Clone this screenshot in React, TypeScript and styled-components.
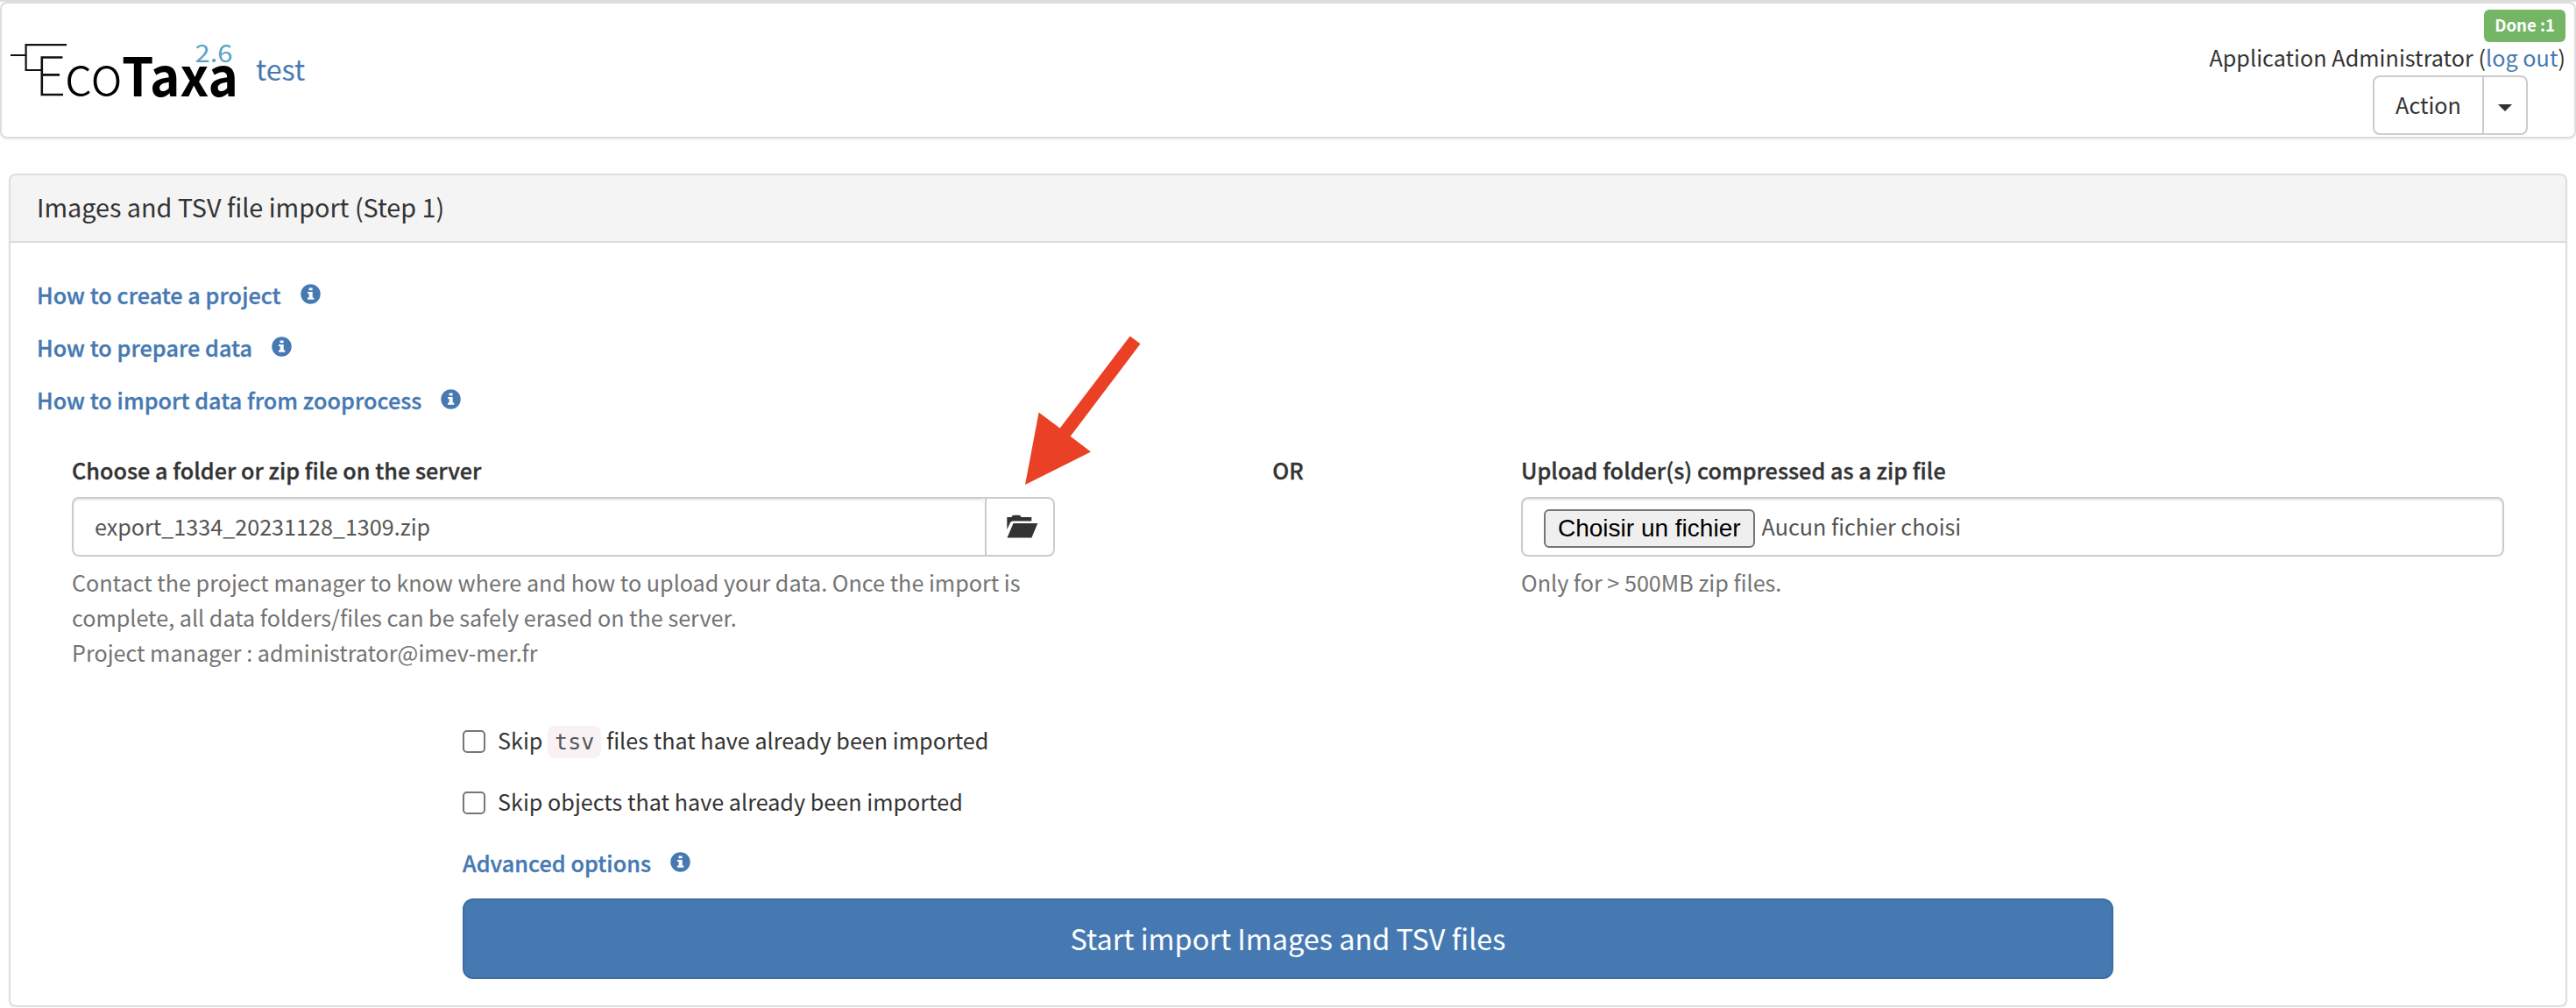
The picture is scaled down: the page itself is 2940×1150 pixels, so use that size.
import React from "react";
import styled, { createGlobalStyle } from "styled-components";

const GlobalStyle = createGlobalStyle`
  *, *::before, *::after { box-sizing: border-box; }
  body {
    margin: 0;
    background: #fff;
    color: #333;
    font-family: "Noto Sans CJK SC", "Open Sans", sans-serif;
    font-size: 25.15px;
    line-height: 40px;
  }
`;

const Page = styled.div`
  border-top: 2px solid #ddd;
`;

const Navbar = styled.header`
  display: flex;
  justify-content: space-between;
  height: 156px;
  padding: 0 10px 0 10px;
  border: 2px solid #ddd;
  border-radius: 8px;
  box-shadow: 0 2px 2px rgba(0, 0, 0, 0.05);
`;

const Brand = styled.div`
  display: flex;
  align-items: flex-start;
  gap: 23px;
  padding-top: 46px;
`;

const Logo = styled.svg`
  display: block;
  width: 257px;
  height: 60px;
  overflow: visible;
`;

const ProjectLink = styled.a`
  margin-top: 8px;
  font-size: 32.3px;
  color: #4679b2;
`;

const UserArea = styled.div`
  display: flex;
  flex-direction: column;
  align-items: flex-end;
  padding-top: 7px;
`;

const JobBadge = styled.span`
  height: 37px;
  padding: 0 12px;
  border-radius: 6px;
  background: #74b566;
  color: #fff;
  font-size: 18.6px;
  font-weight: 700;
  line-height: 34px;
`;

const UserName = styled.div`
  margin-top: -3px;
  line-height: 41px;
  letter-spacing: 0.04px;
`;

const Link = styled.a`
  color: #4679b2;
`;

const ButtonGroup = styled.div`
  display: flex;
  width: 177px;
  height: 68px;
  margin-right: 43px;
  border: 2px solid #ccc;
  border-radius: 8px;
`;

const ActionButton = styled.div`
  flex: 1;
  padding-top: 11px;
  text-align: center;
`;

const CaretButton = styled.div`
  display: flex;
  align-items: center;
  justify-content: center;
  width: 50px;
  border-left: 2px solid #ccc;
`;

const Caret = styled.span`
  margin-top: 5px;
  border: 8px solid transparent;
  border-top-color: #333;
  border-bottom: 0;
`;

const Panel = styled.section`
  height: 951px;
  margin: 40px 10px 0;
  border: 2px solid #ddd;
  border-radius: 8px;
  box-shadow: 0 2px 2px rgba(0, 0, 0, 0.05);
`;

const PanelHeading = styled.h1`
  height: 77px;
  margin: 0;
  padding: 16px 30px 0;
  border-bottom: 2px solid #ddd;
  border-radius: 6px 6px 0 0;
  background: #f4f4f4;
  font-size: 28.75px;
  font-weight: 400;
`;

const PanelBody = styled.div`
  padding: 29px 30px 0;
`;

const HelpLink = styled.a`
  display: flex;
  align-items: center;
  gap: 22px;
  height: 60px;
  color: #4679b2;
  font-weight: 500;
  letter-spacing: 0.07px;
  -webkit-text-stroke: 0.35px #4679b2;
`;

const InfoSvg = styled.svg`
  width: 23px;
  height: 23px;
  margin-bottom: 1px;
`;

const Sources = styled.div`
  display: grid;
  grid-template-columns: 1122px 1fr 1122px;
  height: 324px;
  padding: 31px 40px 0;
`;

const SourceTitle = styled.div<{ $center?: boolean }>`
  height: 50px;
  line-height: 38px;
  font-weight: 500;
  letter-spacing: 0.05px;
  text-align: ${(p) => (p.$center ? "center" : "left")};
  -webkit-text-stroke: 0.35px #333;
`;

const InputGroup = styled.div`
  display: flex;
  height: 68px;
  border: 2px solid #ccc;
  border-radius: 8px;
  color: #555;
`;

const InputValue = styled.div`
  display: flex;
  flex: 1;
  align-items: center;
  gap: 8px;
  padding: 0 0 2px 24px;
  border-radius: 6px;
  box-shadow: inset 0 2px 2px rgba(0, 0, 0, 0.075);
`;

const BrowseButton = styled.div`
  display: flex;
  align-items: center;
  justify-content: center;
  width: 78px;
  padding: 0 0 2px 6px;
  border-left: 2px solid #ccc;
`;

const FileButton = styled.span`
  height: 44px;
  margin-top: 6px;
  padding: 0 14px;
  border: 2px solid #767676;
  border-radius: 6px;
  background: #efefef;
  color: #000;
  font-family: "Liberation Sans", Arial, sans-serif;
  font-size: 28px;
  line-height: 39px;
`;

const HelpText = styled.p`
  margin: 9px 0 0;
  color: #737373;
`;

const Line = styled.span`
  display: block;
  white-space: nowrap;
`;

const Options = styled.div`
  padding: 0 486px;
`;

const CheckList = styled.div`
  margin-bottom: 4px;
`;

const CheckRow = styled.label`
  display: flex;
  align-items: center;
  gap: 14px;
  height: 70px;
  padding-bottom: 2px;
  letter-spacing: 0.02px;
`;

const Checkbox = styled.input`
  appearance: none;
  width: 26px;
  height: 26px;
  margin: 4px 0 0;
  border: 2px solid #767676;
  border-radius: 5px;
  background: #fff;
`;

const Code = styled.code`
  display: inline-block;
  height: 37px;
  padding: 0 8px;
  border-radius: 8px;
  background: #f9f2f4;
  color: #555;
  font-family: "DejaVu Sans Mono", monospace;
  font-size: 25px;
  line-height: 37px;
`;

const StartButton = styled.button`
  display: block;
  width: 100%;
  height: 92px;
  margin-top: 11px;
  padding: 0 0 3px;
  border: 2px solid #3f6ca3;
  border-radius: 12px;
  background: #4679b2;
  color: #fff;
  font: inherit;
  font-size: 32.4px;
`;

const Arrow = styled.svg`
  position: absolute;
  left: 1170px;
  top: 383px;
  width: 132px;
  height: 171px;
`;

function EcoTaxaLogo() {
  return (
    <Logo viewBox="12 50 257 60">
      <g fill="none" stroke="#111" strokeWidth="2.2">
        <path d="M12 63H29.6M76 51.1H29.6V80H48" />
        <path d="M71.5 65.5H47.8V108H72M48 85.4H68" strokeWidth="2.6" />
      </g>
      <text x="73.8" y="109" fontSize="61" fontWeight="200" textLength="66" lengthAdjust="spacingAndGlyphs">co</text>
      <text x="139" y="109.5" fontSize="61" fontWeight="700" fill="#000" textLength="133" lengthAdjust="spacingAndGlyphs">Taxa</text>
      <text x="222.5" y="71" fontSize="28" fill="#5ba3c4" textLength="43" lengthAdjust="spacingAndGlyphs">2.6</text>
    </Logo>
  );
}

function InfoIcon() {
  return (
    <InfoSvg viewBox="0 0 23 23">
      <circle cx="11.5" cy="11.5" r="11.2" fill="#4679b2" />
      <path fill="#fff" d="M9.6 4.4h4v2.8h-4zM8 8.9h5.7v6.6h1.6v2.2H8v-2.2h1.7v-4.4H8z" />
    </InfoSvg>
  );
}

function FolderOpenIcon() {
  return (
    <svg width="36" height="27" viewBox="0 0 36 27">
      <path fill="#333" d="M0.3 17V3H5.5Q6 0.8 8 0.8H14Q16 0.8 16.5 3H28.3V7.6H6.6Q4.6 7.6 3.9 9.4Z" />
      <path fill="#333" d="M7.5 10H35.3L28.4 26.4H0.5Z" />
    </svg>
  );
}

const guides = ["How to create a project", "How to prepare data", "How to import data from zooprocess"];

export default function App() {
  return (
    <Page>
      <GlobalStyle />
      <Navbar>
        <Brand>
          <EcoTaxaLogo />
          <ProjectLink>test</ProjectLink>
        </Brand>
        <UserArea>
          <JobBadge>Done :1</JobBadge>
          <UserName>
            Application Administrator (<Link>log out</Link>)
          </UserName>
          <ButtonGroup>
            <ActionButton>Action</ActionButton>
            <CaretButton>
              <Caret />
            </CaretButton>
          </ButtonGroup>
        </UserArea>
      </Navbar>
      <Panel>
        <PanelHeading>Images and TSV file import (Step 1)</PanelHeading>
        <PanelBody>
          {guides.map((guide) => (
            <HelpLink key={guide}>
              {guide}
              <InfoIcon />
            </HelpLink>
          ))}
          <Sources>
            <div>
              <SourceTitle>Choose a folder or zip file on the server</SourceTitle>
              <InputGroup>
                <InputValue>export_1334_20231128_1309.zip</InputValue>
                <BrowseButton>
                  <FolderOpenIcon />
                </BrowseButton>
              </InputGroup>
              <HelpText>
                <Line>Contact the project manager to know where and how to upload your data. Once the import is</Line>
                <Line>complete, all data folders/files can be safely erased on the server.</Line>
                <Line>Project manager : administrator@imev-mer.fr</Line>
              </HelpText>
            </div>
            <SourceTitle $center>OR</SourceTitle>
            <div>
              <SourceTitle>Upload folder(s) compressed as a zip file</SourceTitle>
              <InputGroup>
                <InputValue>
                  <FileButton>Choisir un fichier</FileButton>
                  Aucun fichier choisi
                </InputValue>
              </InputGroup>
              <HelpText>
                <Line>Only for &gt; 500MB zip files.</Line>
              </HelpText>
            </div>
          </Sources>
          <Options>
            <CheckList>
              <CheckRow>
                <Checkbox type="checkbox" />
                <span>
                  Skip <Code>tsv</Code> files that have already been imported
                </span>
              </CheckRow>
              <CheckRow>
                <Checkbox type="checkbox" />
                <span>Skip objects that have already been imported</span>
              </CheckRow>
            </CheckList>
            <HelpLink>
              Advanced options
              <InfoIcon />
            </HelpLink>
            <StartButton>Start import Images and TSV files</StartButton>
          </Options>
        </PanelBody>
      </Panel>
      <Arrow viewBox="0 0 132 171">
        <path fill="#ea4026" d="M119.7 0.5L131.5 9.3L51.7 114.7L75 132.5L0 170L15.6 87.6L39.7 105.5Z" />
      </Arrow>
    </Page>
  );
}
